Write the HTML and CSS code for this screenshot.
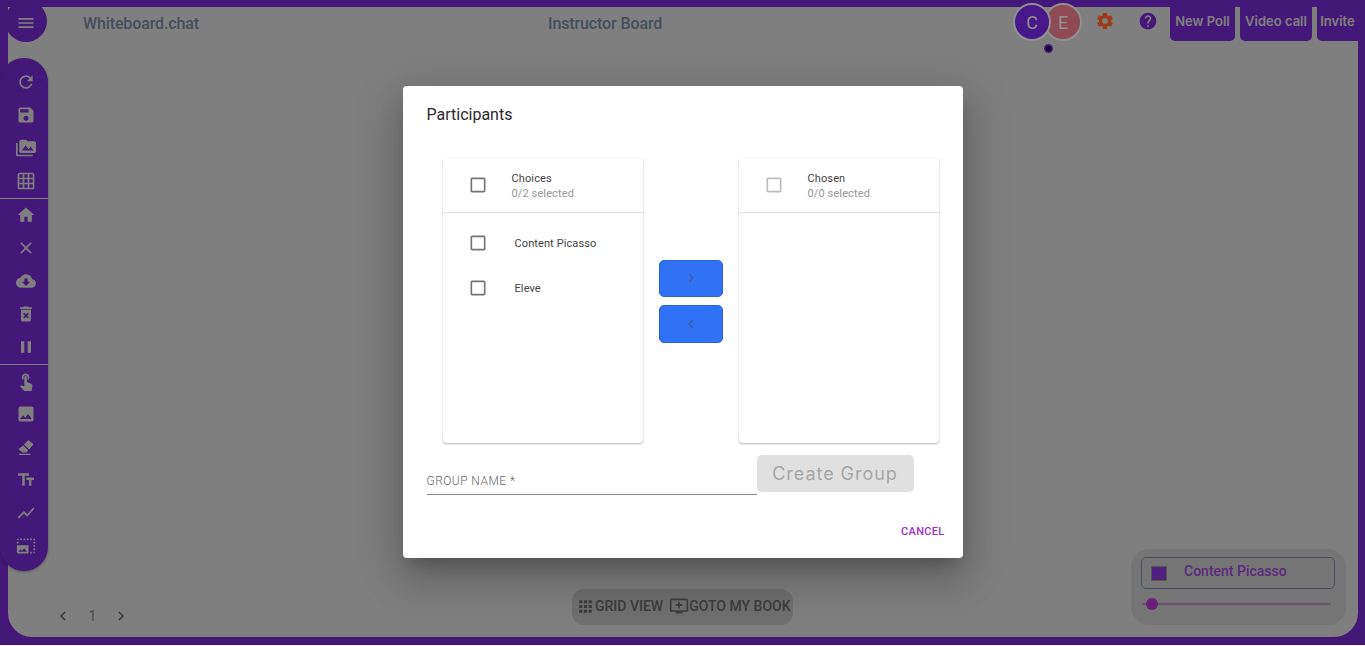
FILE: index.html
```html
<!doctype html>
<html lang="en">

<head>
  <meta charset="UTF-8" />
  <meta name="viewport" content="width=device-width, initial-scale=1.0" />
  <title>Whiteboard.chat</title>
  <link rel="stylesheet" href="styles.css">
</head>

<body>
  <div class="app">
    <div class="canvas">
      <header class="topbar">
        <button class="menu-btn"><svg viewBox="0 0 24 24"><path d="M3 18h18v-2H3v2zm0-5h18v-2H3v2zm0-7v2h18V6H3z"/></svg></button>
        <div class="brand">Whiteboard.chat</div>
        <div class="board-title">Instructor Board</div>
        <div class="top-right">
          <div class="avatars">
            <div class="avatar avatar-c">C<span class="dot"></span></div>
            <div class="avatar avatar-e">E</div>
          </div>
          <svg class="icon-gear" viewBox="0 0 24 24"><path d="M19.14 12.94c.04-.3.06-.61.06-.94 0-.32-.02-.64-.07-.94l2.03-1.58c.18-.14.23-.41.12-.61l-1.92-3.32c-.12-.22-.37-.29-.59-.22l-2.39.96c-.5-.38-1.03-.7-1.62-.94l-.36-2.54c-.04-.24-.24-.41-.48-.41h-3.84c-.24 0-.43.17-.47.41l-.36 2.54c-.59.24-1.13.57-1.62.94l-2.39-.96c-.22-.08-.47 0-.59.22L2.74 8.87c-.12.21-.08.47.12.61l2.03 1.58c-.05.3-.09.63-.09.94s.02.64.07.94l-2.03 1.58c-.18.14-.23.41-.12.61l1.92 3.32c.12.22.37.29.59.22l2.39-.96c.5.38 1.03.7 1.62.94l.36 2.54c.05.24.24.41.48.41h3.84c.24 0 .44-.17.47-.41l.36-2.54c.59-.24 1.13-.56 1.62-.94l2.39.96c.22.08.47 0 .59-.22l1.92-3.32c.12-.22.07-.47-.12-.61l-2.01-1.58zM12 15.6c-1.98 0-3.6-1.62-3.6-3.6s1.62-3.6 3.6-3.6 3.6 1.62 3.6 3.6-1.62 3.6-3.6 3.6z"/></svg>
          <svg class="icon-help" viewBox="0 0 24 24"><path d="M12 2C6.48 2 2 6.48 2 12s4.48 10 10 10 10-4.48 10-10S17.52 2 12 2zm1 17h-2v-2h2v2zm2.07-7.75l-.9.92C13.45 12.9 13 13.5 13 15h-2v-.5c0-1.1.45-2.1 1.17-2.83l1.24-1.26c.37-.36.59-.86.59-1.41 0-1.1-.9-2-2-2s-2 .9-2 2H8c0-2.21 1.79-4 4-4s4 1.79 4 4c0 .88-.36 1.68-.93 2.25z"/></svg>
          <button class="top-btn btn-poll">New Poll</button>
          <button class="top-btn btn-video">Video call</button>
          <button class="top-btn btn-invite">Invite</button>
        </div>
      </header>

      <div class="stage">
        <nav class="sidebar">
          <div class="tool"><svg viewBox="0 0 24 24"><path d="M17.65 6.35C16.2 4.9 14.21 4 12 4c-4.42 0-7.99 3.58-7.99 8s3.57 8 7.99 8c3.73 0 6.84-2.55 7.73-6h-2.08c-.82 2.33-3.04 4-5.65 4-3.31 0-6-2.69-6-6s2.69-6 6-6c1.66 0 3.14.69 4.22 1.78L13 11h7V4l-2.35 2.35z"/></svg></div>
          <div class="tool"><svg viewBox="0 0 24 24"><path d="M17 3H5c-1.11 0-2 .9-2 2v14c0 1.1.89 2 2 2h14c1.1 0 2-.9 2-2V7l-4-4zm-5 16c-1.66 0-3-1.34-3-3s1.34-3 3-3 3 1.34 3 3-1.34 3-3 3zm3-10H5V5h10v4z"/></svg></div>
          <div class="tool"><svg viewBox="0 0 24 24"><path d="M2 6H0v5h.01L0 20c0 1.1.9 2 2 2h18v-2H2V6zm20-2h-8l-2-2H6c-1.1 0-1.99.9-1.99 2L4 16c0 1.1.9 2 2 2h16c1.1 0 2-.9 2-2V6c0-1.1-.9-2-2-2zM7 15l4.5-6 3.5 4.51 2.5-3.01L21 15H7z"/></svg></div>
          <div class="tool"><svg viewBox="0 0 24 24"><path d="M20 2H4c-1.1 0-2 .9-2 2v16c0 1.1.9 2 2 2h16c1.1 0 2-.9 2-2V4c0-1.1-.9-2-2-2zM8 20H4v-4h4v4zm0-6H4v-4h4v4zm0-6H4V4h4v4zm6 12h-4v-4h4v4zm0-6h-4v-4h4v4zm0-6h-4V4h4v4zm6 12h-4v-4h4v4zm0-6h-4v-4h4v4zm0-6h-4V4h4v4z"/></svg></div>
          <hr class="tool-sep">
          <div class="tool"><svg viewBox="0 0 24 24"><path d="M10 20v-6h4v6h5v-8h3L12 3 2 12h3v8z"/></svg></div>
          <div class="tool"><svg viewBox="0 0 24 24"><path d="M19 6.41L17.59 5 12 10.59 6.41 5 5 6.41 10.59 12 5 17.59 6.41 19 12 13.41 17.59 19 19 17.59 13.41 12z"/></svg></div>
          <div class="tool"><svg viewBox="0 0 24 24"><path d="M19.35 10.04C18.67 6.59 15.64 4 12 4 9.11 4 6.6 5.64 5.35 8.04 2.34 8.36 0 10.91 0 14c0 3.31 2.69 6 6 6h13c2.76 0 5-2.24 5-5 0-2.64-2.05-4.78-4.65-4.96zM17 13l-5 5-5-5h3V9h4v4h3z"/></svg></div>
          <div class="tool"><svg viewBox="0 0 24 24"><path d="M6 19c0 1.1.9 2 2 2h8c1.1 0 2-.9 2-2V7H6v12zm2.46-7.12l1.41-1.41L12 12.59l2.12-2.12 1.41 1.41L13.41 14l2.12 2.12-1.41 1.41L12 15.41l-2.12 2.12-1.41-1.41L10.59 14l-2.13-2.12zM15.5 4l-1-1h-5l-1 1H5v2h14V4z"/></svg></div>
          <div class="tool"><svg viewBox="0 0 24 24"><path d="M6 19h4V5H6v14zm8-14v14h4V5h-4z"/></svg></div>
          <hr class="tool-sep">
          <div class="tool"><svg viewBox="0 0 24 24"><path d="M9 11.24V7.5C9 6.12 10.12 5 11.5 5S14 6.12 14 7.5v3.74c1.21-.81 2-2.18 2-3.74C16 5.01 13.99 3 11.5 3S7 5.01 7 7.5c0 1.56.79 2.93 2 3.74zm9.84 4.63l-4.54-2.26c-.17-.07-.35-.11-.54-.11H13v-6c0-.83-.67-1.5-1.5-1.5S10 6.67 10 7.5v10.74l-3.43-.72c-.08-.01-.15-.03-.24-.03-.31 0-.59.13-.79.33l-.79.8 4.94 4.94c.27.27.65.44 1.06.44h6.79c.75 0 1.33-.55 1.44-1.28l.75-5.27c.01-.07.02-.14.02-.2 0-.62-.38-1.16-.91-1.38z"/></svg></div>
          <div class="tool"><svg viewBox="0 0 24 24"><path d="M21 19V5c0-1.1-.9-2-2-2H5c-1.1 0-2 .9-2 2v14c0 1.1.9 2 2 2h14c1.1 0 2-.9 2-2zM8.5 13.500l2.5 3.01L14.5 12l4.5 6H5l3.5-4.5z"/></svg></div>
          <div class="tool"><svg viewBox="0 0 24 24"><path d="M15 3.5l6 5.2-5.2 6.2-6.3-5.9zM8.6 10.3l6.2 5.9-2.2 2.4H8L2.8 14.8zM3.500 20h14v1.6h-14z"/></svg></div>
          <div class="tool"><svg viewBox="0 0 24 24"><path d="M2.5 4v3h5v12h3V7h5V4h-13zm19 5h-9v3h3v7h3v-7h3V9z"/></svg></div>
          <div class="tool"><svg viewBox="0 0 24 24"><path d="M3.5 18.49l6-6.01 4 4L22 6.92l-1.41-1.41-7.09 7.97-4-4L2 16.99z"/></svg></div>
          <div class="tool"><svg viewBox="0 0 24 24"><path d="M21 15h2v2h-2v-2zm0-4h2v2h-2v-2zm2 8h-2v2c1 0 2-1 2-2zM13 3h2v2h-2V3zm8 4h2v2h-2V7zm0-4v2h2c0-1-1-2-2-2zM1 7h2v2H1V7zm16-4h2v2h-2V3zm0 16h2v2h-2v-2zM3 3C2 3 1 4 1 5h2V3zm6 0h2v2H9V3zM5 3h2v2H5V3zm-4 8v8c0 1.1.9 2 2 2h12V11H1zm2 8l2.5-3.21 1.79 2.15 2.5-3.22L13 19H3z"/></svg></div>
        </nav>

        <footer class="foot">
          <div class="pager">
            <svg viewBox="0 0 24 24"><path d="M15.41 7.41L14 6l-6 6 6 6 1.41-1.41L10.83 12z"/></svg>
            <span class="page-num">1</span>
            <svg viewBox="0 0 24 24"><path d="M10 6L8.59 7.41 13.17 12l-4.58 4.59L10 18l6-6z"/></svg>
          </div>
          <div class="view-bar">
            <svg class="icon-apps" viewBox="0 0 24 24"><path d="M4 8h4V4H4v4zm6 12h4v-4h-4v4zm-6 0h4v-4H4v4zm0-6h4v-4H4v4zm6 0h4v-4h-4v4zm6-10v4h4V4h-4zm-6 4h4V4h-4v4zm6 6h4v-4h-4v4zm0 6h4v-4h-4v4z"/></svg>
            <span class="view-grid">GRID VIEW</span>
            <svg class="icon-queue" viewBox="0 0 24 24"><path d="M21 3H3c-1.11 0-2 .89-2 2v12c0 1.1.89 2 2 2h5v2h8v-2h5c1.1 0 1.99-.9 1.99-2L23 5c0-1.11-.9-2-2-2zm0 14H3V5h18v12zm-5-7v2h-3v3h-2v-3H8v-2h3V7h2v3h3z"/></svg>
            <span>GOTO MY BOOK</span>
          </div>
          <div class="legend">
            <div class="legend-user">
              <span class="swatch"></span>
              <span class="legend-name">Content Picasso</span>
            </div>
            <div class="slider"><span class="thumb"></span></div>
          </div>
        </footer>
      </div>
    </div>

    <div class="backdrop">
      <div class="dialog">
        <h2 class="dialog-title">Participants</h2>

        <div class="transfer">
          <div class="list">
            <div class="list-head">
              <svg class="check" viewBox="0 0 24 24"><path d="M19 5v14H5V5h14m0-2H5c-1.1 0-2 .9-2 2v14c0 1.1.9 2 2 2h14c1.1 0 2-.9 2-2V5c0-1.1-.9-2-2-2z"/></svg>
              <div>
                <div class="list-name">Choices</div>
                <div class="list-count">0/2 selected</div>
              </div>
            </div>
            <div class="list-body">
              <div class="list-row">
                <svg class="check" viewBox="0 0 24 24"><path d="M19 5v14H5V5h14m0-2H5c-1.1 0-2 .9-2 2v14c0 1.1.9 2 2 2h14c1.1 0 2-.9 2-2V5c0-1.1-.9-2-2-2z"/></svg>
                <span>Content Picasso</span>
              </div>
              <div class="list-row">
                <svg class="check" viewBox="0 0 24 24"><path d="M19 5v14H5V5h14m0-2H5c-1.1 0-2 .9-2 2v14c0 1.1.9 2 2 2h14c1.1 0 2-.9 2-2V5c0-1.1-.9-2-2-2z"/></svg>
                <span>Eleve</span>
              </div>
            </div>
          </div>

          <div class="move-btns">
            <button class="move-btn"><svg viewBox="0 0 24 24"><path d="M10 6L8.59 7.41 13.17 12l-4.58 4.59L10 18l6-6z"/></svg></button>
            <button class="move-btn"><svg viewBox="0 0 24 24"><path d="M15.41 7.41L14 6l-6 6 6 6 1.41-1.41L10.83 12z"/></svg></button>
          </div>

          <div class="list">
            <div class="list-head">
              <svg class="check check-off" viewBox="0 0 24 24"><path d="M19 5v14H5V5h14m0-2H5c-1.1 0-2 .9-2 2v14c0 1.1.9 2 2 2h14c1.1 0 2-.9 2-2V5c0-1.1-.9-2-2-2z"/></svg>
              <div>
                <div class="list-name">Chosen</div>
                <div class="list-count">0/0 selected</div>
              </div>
            </div>
            <div class="list-body"></div>
          </div>
        </div>

        <div class="group-row">
          <label class="group-field">GROUP NAME *</label>
          <button class="create-btn" disabled>Create Group</button>
        </div>

        <div class="dialog-actions">
          <button class="cancel-btn">CANCEL</button>
        </div>
      </div>
    </div>
  </div>
</body>

</html>
```

FILE: styles.css
```css
* {
  box-sizing: border-box;
}

body {
  margin: 0;
  background-color: #f4eefb;
  font-family: 'Roboto', sans-serif;
  overflow: hidden;
}

button {
  font-family: inherit;
  border: none;
  padding: 0;
}

svg {
  display: block;
  fill: currentColor;
}

.app {
  position: relative;
  height: 645px;
  background-color: #8830f0;
  padding: 7px 7px 8px 8px;
}

.canvas {
  height: 100%;
  background-color: #ffffff;
  border-radius: 0 0 24px 24px;
  display: flex;
  flex-direction: column;
}

/* top bar */
.topbar {
  display: flex;
  height: 34px;
  flex-shrink: 0;
}

.menu-btn {
  width: 42px;
  height: 42px;
  margin: -7px 0 0 -3px;
  padding-top: 4px;
  border-radius: 50%;
  background-color: #8830f0;
  color: #ffffff;
  display: flex;
  align-items: center;
  justify-content: center;
  flex-shrink: 0;
}

.menu-btn svg {
  width: 20px;
  height: 20px;
}

.brand,
.board-title {
  font-size: 16px;
  font-weight: 500;
  color: #8b9db8;
  line-height: 33px;
  letter-spacing: -0.12px;
}

.brand {
  margin-left: 36px;
}

.board-title {
  margin-left: 349px;
}

.top-right {
  margin-left: auto;
  display: flex;
}

/* these keep their own colour through the dim layer */
.avatars {
  position: relative;
  z-index: 20;
  display: flex;
  margin-top: -4px;
}

.avatar {
  position: relative;
  width: 38px;
  height: 38px;
  border-radius: 50%;
  border: 2px solid #909090;
  color: #929292;
  font-size: 18px;
  display: flex;
  align-items: center;
  justify-content: center;
}

.avatar-c {
  background-color: #46188a;
  z-index: 1;
}

.avatar-e {
  background-color: #8f4a55;
  margin-left: -7px;
}

.dot {
  position: absolute;
  left: 29px;
  top: 39px;
  width: 9px;
  height: 9px;
  border-radius: 50%;
  background-color: #0a0320;
  border: 2px solid #43177a;
}

.icon-gear,
.icon-help {
  width: 20px;
  height: 20px;
  margin-top: 4px;
}

.icon-gear {
  position: relative;
  z-index: 20;
  color: #9c3c18;
  margin-left: 13px;
}

.icon-help {
  color: #8830f0;
  margin-left: 23px;
}

.top-btn {
  height: 34px;
  padding-bottom: 6px;
  background-color: #8830f0;
  color: #ffffff;
  font-family: 'Inter', sans-serif;
  font-size: 13px;
  font-weight: 600;
  border-radius: 0 0 5px 5px;
}

.btn-poll {
  width: 65px;
  margin-left: 12px;
}

.btn-video {
  width: 72px;
  margin-left: 5px;
}

.btn-invite {
  width: 41px;
  margin-left: 5px;
  border-radius: 0 0 0 5px;
}

/* main area */
.stage {
  flex: 1;
  display: flex;
  flex-direction: column;
}

.sidebar {
  width: 48px;
  margin: 17px 0 0 -8px;
  padding: 8px 0 8px 3px;
  background-color: #8830f0;
  border-radius: 24px;
  box-shadow: 0 1px 3px rgba(0, 0, 0, 0.3);
  color: #ffffff;
}

.tool {
  height: 33px;
  display: flex;
  align-items: center;
  justify-content: center;
}

.tool svg {
  width: 20px;
  height: 20px;
  margin-top: -1px;
}

.tool-sep {
  margin: 0 0 0 -3px;
  border: none;
  height: 1px;
  background-color: #ffffff;
}

.foot {
  margin-top: 18px;
  height: 36px;
  display: flex;
  align-items: flex-end;
}

.pager {
  display: flex;
  align-items: center;
  height: 18px;
  margin-left: 46px;
  color: #777777;
  font-size: 14px;
}

.pager svg {
  width: 18px;
  height: 18px;
}

.page-num {
  width: 40px;
  padding-left: 1px;
  text-align: center;
  color: #999999;
}

.view-bar {
  display: flex;
  align-items: center;
  height: 36px;
  margin-left: 442px;
  width: 221px;
  padding: 0 0 2px 5px;
  border-radius: 12px;
  background-color: rgba(0, 0, 0, 0.13);
  color: #7a7a7a;
  font-size: 14px;
  font-weight: 500;
  white-space: nowrap;
}

.icon-apps {
  width: 19px;
  height: 19px;
  margin-left: -1px;
}

.view-grid {
  margin-right: 6px;
}

.icon-queue {
  width: 20px;
  height: 20px;
}

.legend {
  width: 215px;
  height: 76px;
  margin-left: 338px;
  padding: 8px 11px 0 10px;
  border-radius: 18px;
  background-color: rgba(0, 0, 0, 0.08);
  flex-shrink: 0;
}

.legend-user {
  display: flex;
  align-items: center;
  height: 32px;
  border: 1px solid #8b9db8;
  border-radius: 5px;
  padding-left: 9px;
}

.swatch {
  width: 16px;
  height: 15px;
  background-color: #a040ff;
  border: 1px solid #aaaaaa;
}

.legend-name {
  margin-left: 17px;
  margin-top: -4px;
  font-size: 14px;
  font-weight: 500;
  color: #b354ff;
}

.slider {
  position: relative;
  height: 2px;
  margin: 14px 4px 0 1px;
  background-color: #d8a0e0;
}

.thumb {
  position: absolute;
  left: 4px;
  top: -5px;
  width: 12px;
  height: 12px;
  border-radius: 50%;
  background-color: #d63ef0;
}

/* dialog */
.backdrop {
  position: absolute;
  inset: 0;
  z-index: 10;
  padding-bottom: 1px;
  background-color: rgba(0, 0, 0, 0.5);
  display: flex;
  align-items: center;
  justify-content: center;
}

.dialog {
  width: 560px;
  height: 472px;
  background-color: #ffffff;
  border-radius: 4px;
  box-shadow: 0 11px 15px -7px rgba(0, 0, 0, 0.2), 0 24px 38px 3px rgba(0, 0, 0, 0.14), 0 9px 46px 8px rgba(0, 0, 0, 0.12);
}

.dialog-title {
  margin: 0;
  padding: 17px 24px 0;
  height: 72px;
  font-size: 16px;
  font-weight: 400;
  line-height: 24px;
  color: #2a2a2a;
}

.transfer {
  display: flex;
  padding: 0 24px 0 40px;
  gap: 16px;
  align-items: center;
}

.list {
  width: 200px;
  height: 285px;
  flex-shrink: 0;
  border-radius: 4px;
  background-color: #ffffff;
  box-shadow: 0 1px 2px rgba(0, 0, 0, 0.3), 0 0 1px rgba(0, 0, 0, 0.06);
}

.list-head {
  height: 55px;
  padding: 1px 0 0 25px;
  display: flex;
  align-items: center;
  gap: 24px;
  border-bottom: 1px solid #e0e0e0;
  font-size: 11px;
  letter-spacing: 0.12px;
}

.list-name {
  color: #444444;
  line-height: 15px;
}

.list-count {
  color: #969696;
  line-height: 15px;
}

.check {
  width: 20px;
  height: 20px;
  margin-top: -1px;
  color: #757575;
  flex-shrink: 0;
}

.check-off {
  color: #bdbdbd;
}

.list-body {
  padding-top: 8px;
}

.list-row {
  height: 45px;
  padding-left: 25px;
  display: flex;
  align-items: center;
  gap: 27px;
  font-size: 11px;
  letter-spacing: 0.1px;
  color: #444444;
}

.move-btns {
  display: flex;
  flex-direction: column;
  gap: 8px;
  margin-top: 1px;
}

.move-btn {
  width: 64px;
  height: 37px;
  background-color: #3072f5;
  border: 1px solid #2a62d0;
  border-radius: 5px;
  color: #3d5ea8;
  display: flex;
  align-items: center;
  justify-content: center;
}

.move-btn + .move-btn {
  height: 38px;
}

.move-btn svg {
  width: 18px;
  height: 18px;
}

.group-row {
  display: flex;
  align-items: flex-start;
  padding: 12px 0 0 24px;
}

.group-field {
  width: 330px;
  height: 40px;
  padding-top: 19px;
  border-bottom: 1px solid #8a8a8a;
  font-size: 12px;
  font-weight: 300;
  color: #666666;
  letter-spacing: 0.45px;
}

.create-btn {
  width: 157px;
  height: 37px;
  background-color: #e0e0e0;
  border-radius: 5px;
  color: #a6a6a6;
  font-family: 'Inter', sans-serif;
  font-size: 18px;
  letter-spacing: 0.95px;
}

.dialog-actions {
  display: flex;
  justify-content: flex-end;
  padding: 30px 18px 0 0;
}

.cancel-btn {
  background: none;
  font-size: 11px;
  font-weight: 500;
  color: #a12dc4;
  letter-spacing: 0.3px;
}
```
